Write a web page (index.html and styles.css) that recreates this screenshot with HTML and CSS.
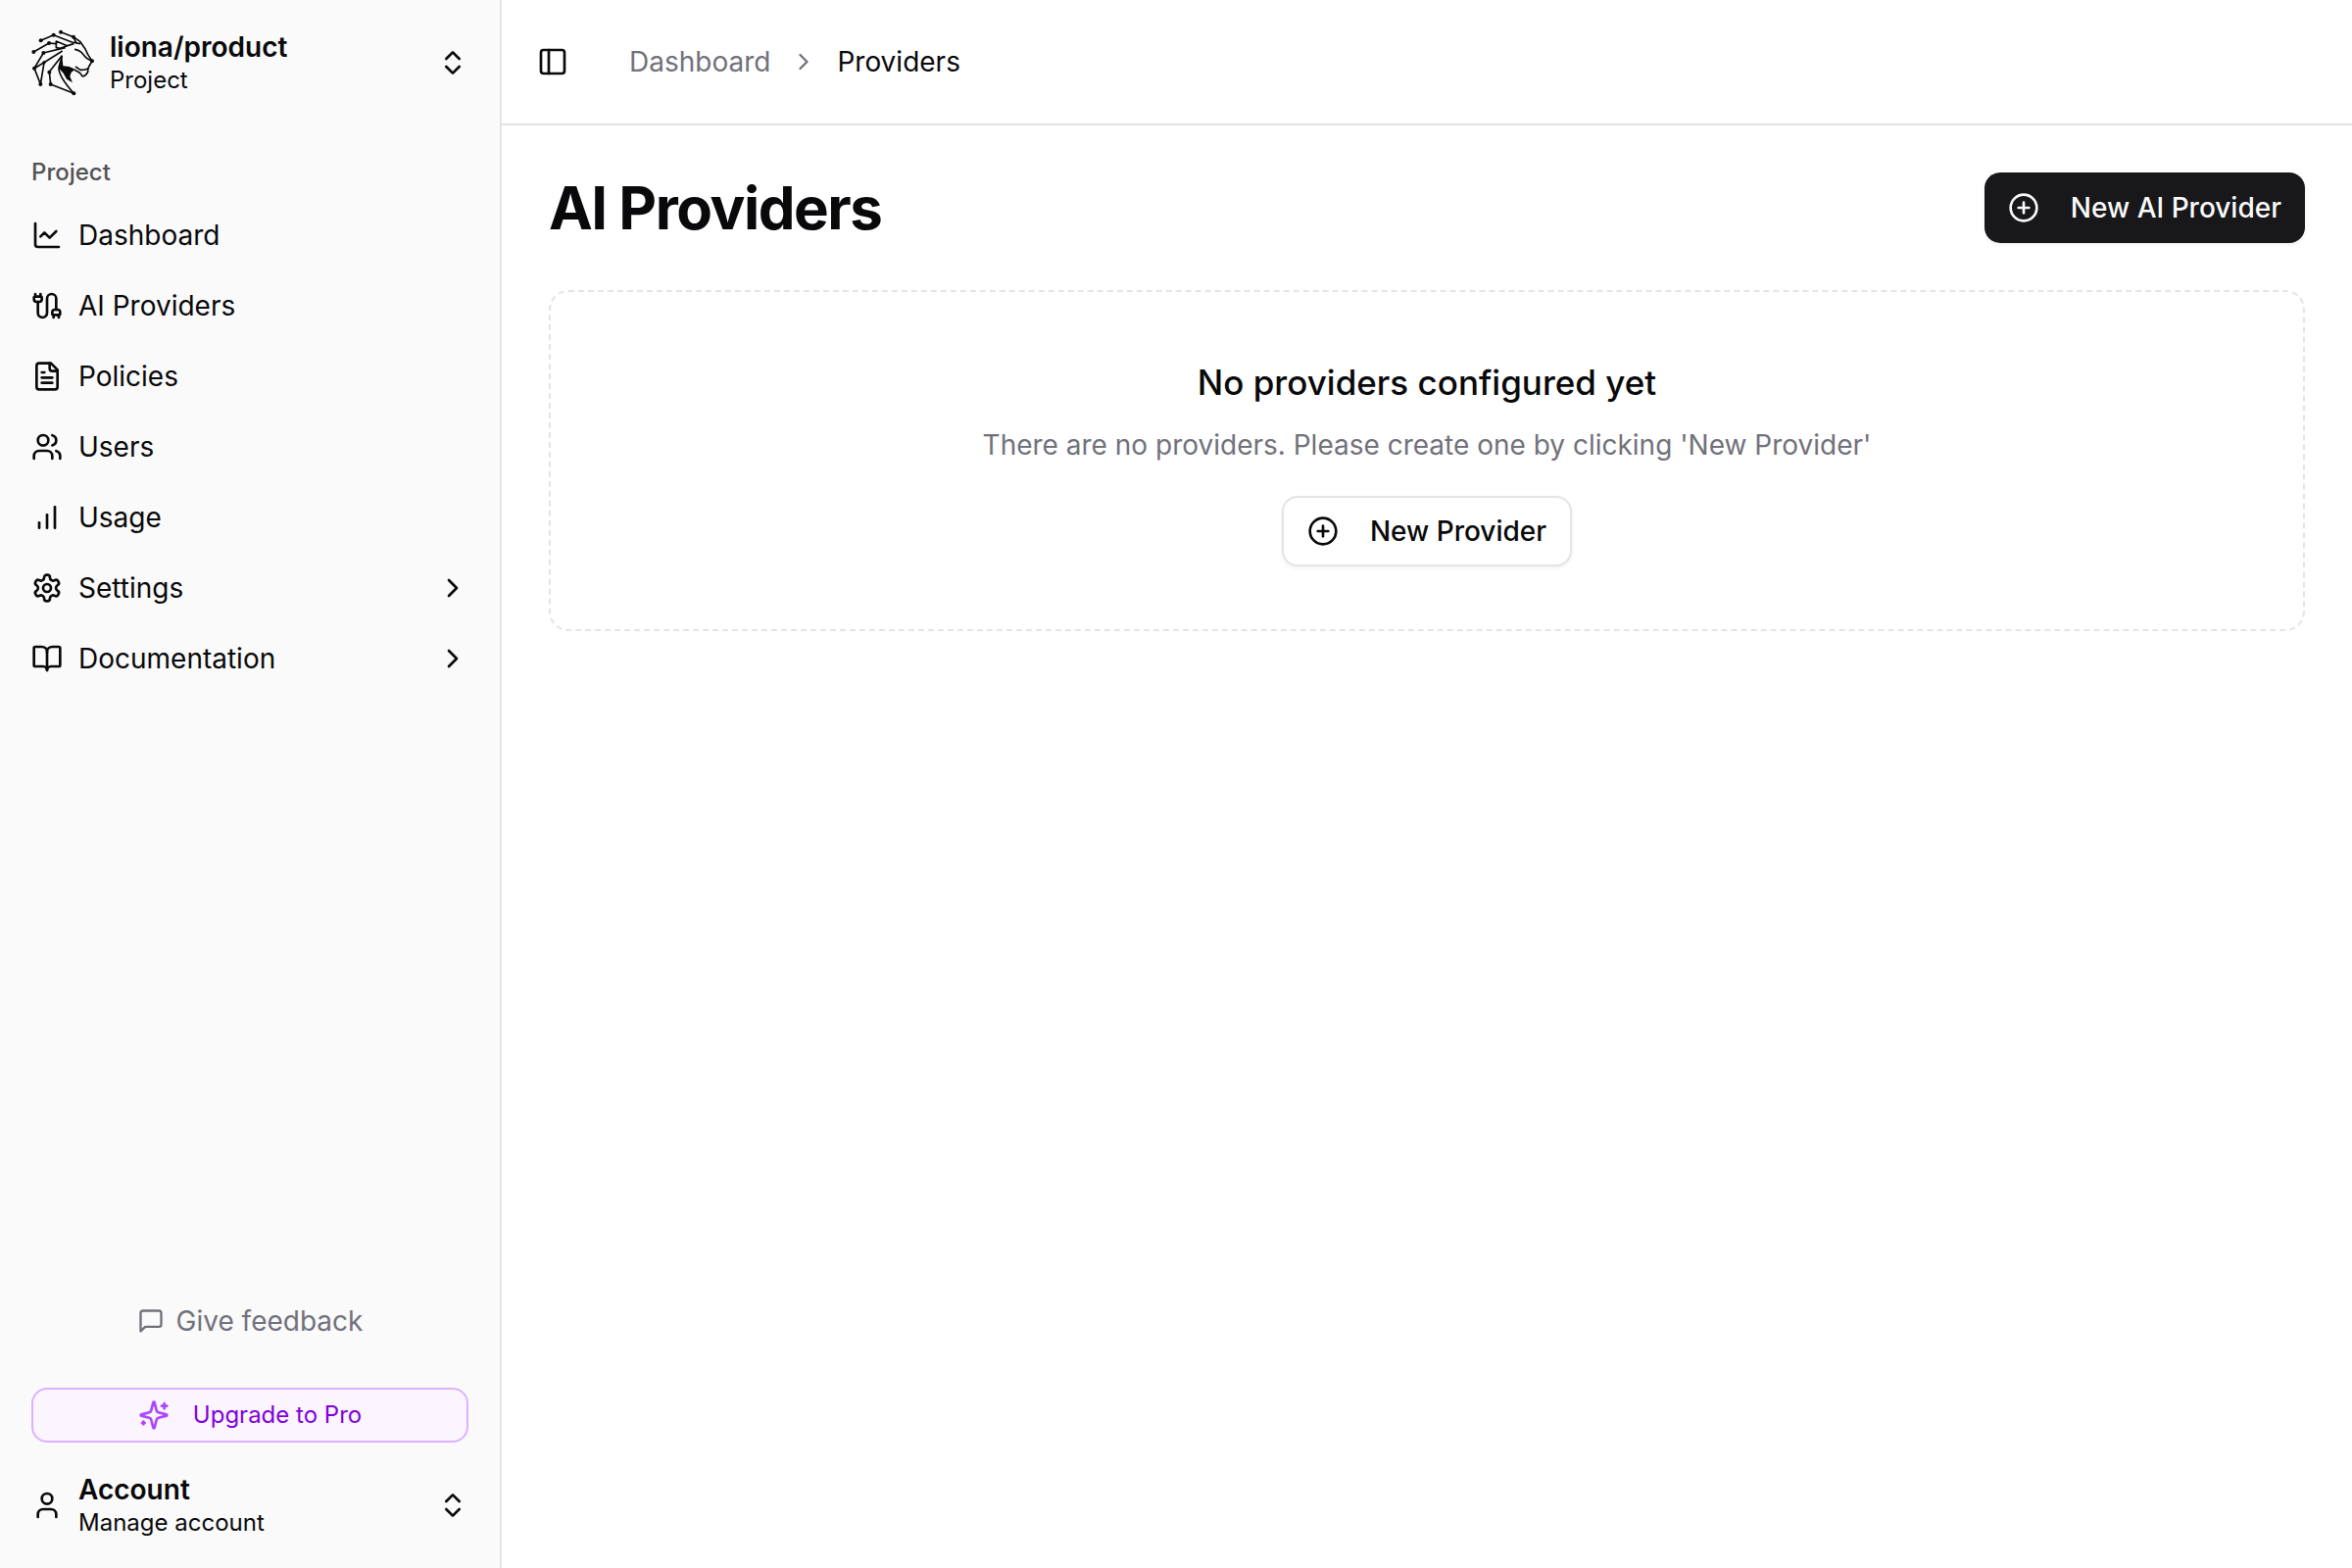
FILE: index.html
```html
<!DOCTYPE html>
<html lang="en">
<head>
    <meta charset="UTF-8">
    <meta name="viewport" content="width=device-width, initial-scale=1.0">
    <title>AI Providers</title>
    <link rel="stylesheet" href="styles.css">
</head>
<body>
    <div class="layout">
        <aside class="sidebar">
            <button type="button" class="switcher">
                <svg class="logo" viewBox="36 36 192 192">
                    <g class="logo-lines">
                        <path d="M65 64 L104 47 L160 69 L186 74"/>
                        <path d="M126 38 L165 53 L173 71"/>
                        <path d="M165 53 L186 68 L201 90 L209 107 L222 127"/>
                        <path d="M43 99 L90 72 L112 74"/>
                        <path d="M112 66 L146 80 L124 88 L112 86 Z"/>
                        <path d="M146 80 L166 74"/>
                        <path d="M73 102 L140 86"/>
                        <path d="M73 102 L45 149 L75 131 L131 96"/>
                        <path d="M45 149 L64 198 L75 131"/>
                        <path d="M166 226 L95 198 L91 160 L130 110"/>
                        <path d="M130 110 L120 148 Q120 175 166 226"/>
                        <path d="M168 91 Q184 92 196 108 Q204 120 222 127"/>
                        <path d="M222 127 L212 144 Q208 152 209 160 Q203 172 193 174 L184 163 L168 154"/>
                        <path d="M212 149 Q198 155 186 154 L171 144"/>
                    </g>
                    <path d="M130 110 L133 142 L152 144 L170 152 L158 162 L154 174 L162 193 L144 182 L134 164 L121 150 Z"/>
                    <g>
                        <circle cx="65" cy="64" r="6"/>
                        <circle cx="104" cy="47" r="6"/>
                        <circle cx="126" cy="38" r="6"/>
                        <circle cx="165" cy="53" r="6"/>
                        <circle cx="90" cy="72" r="6"/>
                        <circle cx="43" cy="99" r="6"/>
                        <circle cx="73" cy="102" r="6"/>
                        <circle cx="45" cy="149" r="6"/>
                        <circle cx="75" cy="131" r="5"/>
                        <circle cx="64" cy="198" r="6"/>
                        <circle cx="95" cy="198" r="6"/>
                        <circle cx="91" cy="161" r="6"/>
                        <circle cx="166" cy="226" r="6"/>
                        <circle cx="222" cy="127" r="6"/>
                    </g>
                </svg>
                <span class="switcher-text">
                    <span class="switcher-name">liona/product</span>
                    <span class="switcher-sub">Project</span>
                </span>
                <svg class="icon" viewBox="0 0 24 24"><path d="m7 15 5 5 5-5"/><path d="m7 9 5-5 5 5"/></svg>
            </button>

            <nav class="nav" aria-labelledby="navLabel">
                <div class="nav-label" id="navLabel">Project</div>
                <ul class="nav-list">
                    <li><a href="#" class="nav-item">
                        <svg class="icon" viewBox="0 0 24 24"><path d="M3 3v16a2 2 0 0 0 2 2h16"/><path d="m19 9-5 5-4-4-3 3"/></svg>
                        <span>Dashboard</span>
                    </a></li>
                    <li><a href="#" class="nav-item">
                        <svg class="icon" viewBox="0 0 24 24"><path d="M17 21v-2a1 1 0 0 1-1-1v-1a2 2 0 0 1 2-2h2a2 2 0 0 1 2 2v1a1 1 0 0 1-1 1"/><path d="M19 15V6.5a1 1 0 0 0-7 0v11a1 1 0 0 1-7 0V9"/><path d="M21 21v-2h-4"/><path d="M3 5h4V3"/><path d="M7 5a1 1 0 0 1 1 1v1a2 2 0 0 1-2 2H4a2 2 0 0 1-2-2V6a1 1 0 0 1 1-1V3"/></svg>
                        <span>AI Providers</span>
                    </a></li>
                    <li><a href="#" class="nav-item">
                        <svg class="icon" viewBox="0 0 24 24"><path d="M15 2H6a2 2 0 0 0-2 2v16a2 2 0 0 0 2 2h12a2 2 0 0 0 2-2V7Z"/><path d="M14 2v4a2 2 0 0 0 2 2h4"/><path d="M10 9H8"/><path d="M16 13H8"/><path d="M16 17H8"/></svg>
                        <span>Policies</span>
                    </a></li>
                    <li><a href="#" class="nav-item">
                        <svg class="icon" viewBox="0 0 24 24"><path d="M16 21v-2a4 4 0 0 0-4-4H6a4 4 0 0 0-4 4v2"/><circle cx="9" cy="7" r="4"/><path d="M22 21v-2a4 4 0 0 0-3-3.87"/><path d="M16 3.13a4 4 0 0 1 0 7.75"/></svg>
                        <span>Users</span>
                    </a></li>
                    <li><a href="#" class="nav-item">
                        <svg class="icon" viewBox="0 0 24 24"><path d="M6 20v-4"/><path d="M12 20V10"/><path d="M18 20V4"/></svg>
                        <span>Usage</span>
                    </a></li>
                    <li><button type="button" class="nav-item" aria-expanded="false">
                        <svg class="icon" viewBox="0 0 24 24"><path d="M12.22 2h-.44a2 2 0 0 0-2 2v.18a2 2 0 0 1-1 1.73l-.43.25a2 2 0 0 1-2 0l-.15-.08a2 2 0 0 0-2.73.73l-.22.38a2 2 0 0 0 .73 2.73l.15.1a2 2 0 0 1 1 1.72v.51a2 2 0 0 1-1 1.74l-.15.09a2 2 0 0 0-.73 2.73l.22.38a2 2 0 0 0 2.73.73l.15-.08a2 2 0 0 1 2 0l.43.25a2 2 0 0 1 1 1.73V20a2 2 0 0 0 2 2h.44a2 2 0 0 0 2-2v-.18a2 2 0 0 1 1-1.73l.43-.25a2 2 0 0 1 2 0l.15.08a2 2 0 0 0 2.73-.73l.22-.39a2 2 0 0 0-.73-2.73l-.15-.08a2 2 0 0 1-1-1.74v-.5a2 2 0 0 1 1-1.74l.15-.09a2 2 0 0 0 .73-2.73l-.22-.38a2 2 0 0 0-2.73-.73l-.15.08a2 2 0 0 1-2 0l-.43-.25a2 2 0 0 1-1-1.73V4a2 2 0 0 0-2-2z"/><circle cx="12" cy="12" r="3"/></svg>
                        <span>Settings</span>
                        <svg class="icon chevron" viewBox="0 0 24 24"><path d="m9 18 6-6-6-6"/></svg>
                    </button></li>
                    <li><button type="button" class="nav-item" aria-expanded="false">
                        <svg class="icon" viewBox="0 0 24 24"><path d="M12 7v14"/><path d="M3 18a1 1 0 0 1-1-1V4a1 1 0 0 1 1-1h5a4 4 0 0 1 4 4 4 4 0 0 1 4-4h5a1 1 0 0 1 1 1v13a1 1 0 0 1-1 1h-6a3 3 0 0 0-3 3 3 3 0 0 0-3-3z"/></svg>
                        <span>Documentation</span>
                        <svg class="icon chevron" viewBox="0 0 24 24"><path d="m9 18 6-6-6-6"/></svg>
                    </button></li>
                </ul>
            </nav>

            <div class="sidebar-footer">
                <button type="button" class="feedback">
                    <svg class="icon icon-sm" viewBox="0 0 24 24"><path d="M21 15a2 2 0 0 1-2 2H7l-4 4V5a2 2 0 0 1 2-2h14a2 2 0 0 1 2 2z"/></svg>
                    Give feedback
                </button>
                <button type="button" class="upgrade">
                    <svg class="icon" viewBox="0 0 24 24"><path d="M9.937 15.5A2 2 0 0 0 8.5 14.063l-6.135-1.582a.5.5 0 0 1 0-.962L8.5 9.936A2 2 0 0 0 9.937 8.5l1.582-6.135a.5.5 0 0 1 .963 0L14.063 8.5A2 2 0 0 0 15.5 9.937l6.135 1.581a.5.5 0 0 1 0 .964L15.5 14.063a2 2 0 0 0-1.437 1.437l-1.582 6.135a.5.5 0 0 1-.963 0z"/><path d="M20 3v4"/><path d="M22 5h-4"/><path d="M4 17v2"/><path d="M5 18H3"/></svg>
                    Upgrade to Pro
                </button>
                <button type="button" class="switcher">
                    <svg class="icon" viewBox="0 0 24 24"><path d="M19 21v-2a4 4 0 0 0-4-4H9a4 4 0 0 0-4 4v2"/><circle cx="12" cy="7" r="4"/></svg>
                    <span class="switcher-text">
                        <span class="switcher-name">Account</span>
                        <span class="switcher-sub">Manage account</span>
                    </span>
                    <svg class="icon" viewBox="0 0 24 24"><path d="m7 15 5 5 5-5"/><path d="m7 9 5-5 5 5"/></svg>
                </button>
            </div>
        </aside>

        <div class="page">
            <header class="topbar">
                <button type="button" class="toggle" aria-label="Toggle Sidebar">
                    <svg class="icon" viewBox="0 0 24 24"><rect width="18" height="18" x="3" y="3" rx="2"/><path d="M9 3v18"/></svg>
                </button>
                <nav class="breadcrumb" aria-label="breadcrumb">
                    <a href="#">Dashboard</a>
                    <svg class="icon icon-sm" viewBox="0 0 24 24"><path d="m9 18 6-6-6-6"/></svg>
                    <span class="current" aria-current="page">Providers</span>
                </nav>
            </header>

            <main class="content">
                <div class="title-row">
                    <h1>AI Providers</h1>
                    <button type="button" class="btn btn-primary">
                        <svg class="icon" viewBox="0 0 24 24"><circle cx="12" cy="12" r="10"/><path d="M8 12h8"/><path d="M12 8v8"/></svg>
                        New AI Provider
                    </button>
                </div>
                <section class="empty">
                    <h2>No providers configured yet</h2>
                    <p>There are no providers. Please create one by clicking 'New Provider'</p>
                    <button type="button" class="btn btn-outline">
                        <svg class="icon" viewBox="0 0 24 24"><circle cx="12" cy="12" r="10"/><path d="M8 12h8"/><path d="M12 8v8"/></svg>
                        New Provider
                    </button>
                </section>
            </main>
        </div>
    </div>
</body>
</html>
```
FILE: styles.css
```css
* {
    box-sizing: border-box;
}
body {
    margin: 0;
    font-family: Inter, 'Liberation Sans', sans-serif;
    font-size: 28px;
    line-height: 40px;
    color: #09090b;
    background-color: #ffffff;
}
h1, h2, p, ul {
    margin: 0;
    padding: 0;
}
button {
    font: inherit;
    color: inherit;
    background: none;
    border: none;
    padding: 0;
    cursor: pointer;
}
a {
    color: inherit;
    text-decoration: none;
}
.icon {
    width: 32px;
    height: 32px;
    flex-shrink: 0;
    fill: none;
    stroke: currentColor;
    stroke-width: 2;
    stroke-linecap: round;
    stroke-linejoin: round;
}
.icon-sm {
    width: 28px;
    height: 28px;
}
.layout {
    display: flex;
    min-height: 100vh;
}

/* Sidebar */
.sidebar {
    display: flex;
    flex-direction: column;
    flex: 0 0 512px;
    padding: 16px;
    background-color: #fafafa;
    border-right: 2px solid #e4e4e7;
}
.switcher {
    display: flex;
    align-items: center;
    gap: 16px;
    width: 100%;
    height: 96px;
    padding: 0 16px;
    text-align: left;
}
.switcher-text {
    display: flex;
    flex-direction: column;
    flex: 1;
}
.switcher-name {
    font-weight: 600;
    line-height: 36px;
}
.switcher-sub {
    font-size: 24px;
    line-height: 32px;
}
.logo {
    width: 64px;
    height: 64px;
    overflow: visible;
    fill: currentColor;
}
.logo-lines {
    fill: none;
    stroke: currentColor;
    stroke-width: 5;
    stroke-linejoin: round;
}
.nav {
    margin-top: 32px;
}
.nav-label {
    padding: 0 16px;
    font-size: 24px;
    font-weight: 500;
    line-height: 64px;
    color: #525255;
}
.nav-list {
    display: flex;
    flex-direction: column;
    gap: 8px;
    list-style: none;
}
.nav-item {
    display: flex;
    align-items: center;
    gap: 16px;
    width: 100%;
    height: 64px;
    padding: 0 16px;
}
.chevron {
    margin-left: auto;
}
.sidebar-footer {
    display: flex;
    flex-direction: column;
    margin-top: auto;
}
.feedback {
    display: flex;
    align-items: center;
    align-self: center;
    gap: 12px;
    margin-bottom: 48px;
    color: #71717b;
}
.upgrade {
    display: flex;
    align-items: center;
    justify-content: center;
    gap: 24px;
    height: 56px;
    margin: 0 16px 16px;
    font-size: 24px;
    color: #8200db;
    background-color: #faf5ff;
    border: 2px solid #dab2ff;
    border-radius: 16px;
}
.upgrade .icon {
    color: #ad46ff;
}

/* Main area */
.page {
    flex: 1;
    min-width: 0;
}
.topbar {
    display: flex;
    align-items: center;
    gap: 50px;
    height: 128px;
    padding: 0 24px;
    border-bottom: 2px solid #e4e4e7;
}
.toggle {
    display: flex;
    padding: 12px;
}
.breadcrumb {
    display: flex;
    align-items: center;
    gap: 20px;
    color: #71717b;
}
.breadcrumb .current {
    color: #09090b;
}
.content {
    padding: 48px;
}
.title-row {
    display: flex;
    align-items: center;
    justify-content: space-between;
    margin-bottom: 48px;
}
h1 {
    font-size: 60px;
    font-weight: 700;
    line-height: 72px;
    letter-spacing: -0.025em;
}
.btn {
    display: flex;
    align-items: center;
    gap: 32px;
    height: 72px;
    padding: 0 24px;
    font-weight: 500;
    border-radius: 16px;
    box-shadow: 0 2px 4px rgba(0, 0, 0, 0.05);
}
.btn-primary {
    color: #fafafa;
    background-color: #18181b;
}
.btn-outline {
    background-color: #ffffff;
    border: 2px solid #e4e4e7;
}
.empty {
    display: flex;
    flex-direction: column;
    align-items: center;
    padding: 64px;
    text-align: center;
    border: 2px dashed #e4e4e7;
    border-radius: 20px;
}
.empty h2 {
    font-size: 35px;
    font-weight: 500;
    line-height: 56px;
}
.empty p {
    margin: 16px 0 32px;
    color: #71717b;
}
```
